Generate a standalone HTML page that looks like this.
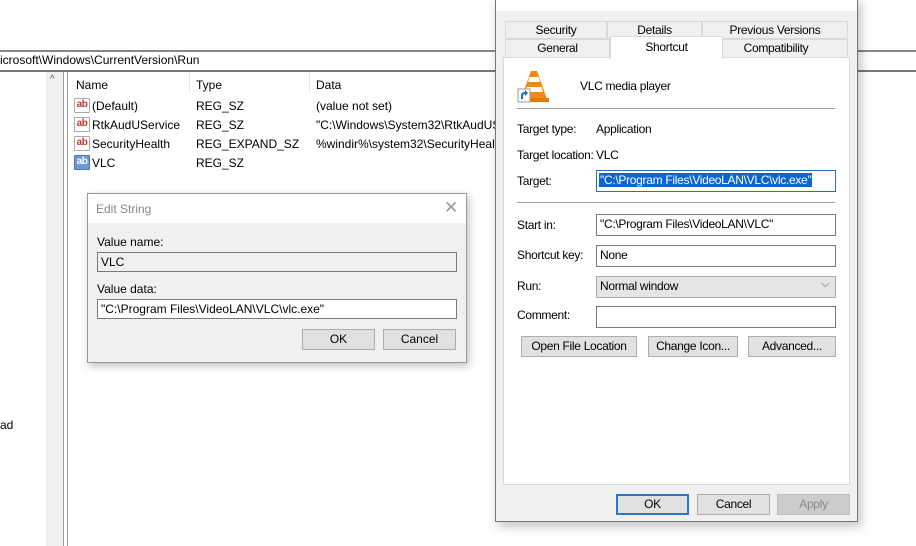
<!DOCTYPE html>
<html><head><meta charset="utf-8"><style>
*{box-sizing:border-box;margin:0;padding:0}
body{width:916px;height:546px;overflow:hidden;background:#fff;font-family:"Liberation Sans",sans-serif;font-size:12px;color:#000;position:relative}
.a{position:absolute}
.t{position:absolute;white-space:nowrap}
.ab{position:absolute;width:16px;height:15px;background:#fff;border:1px solid #aaa;border-radius:1px;font-size:10px;font-weight:bold;color:#c0392b;line-height:12px;text-align:center;letter-spacing:-0.5px}
.ab.v{background:#6a9ad6;color:#fff;border-color:#4a78b8}
.in{position:absolute;background:#fff;border:1px solid #7a7a7a;padding:2px 3px;white-space:nowrap;font-size:12px}
.btn{position:absolute;background:#e1e1e1;border:1px solid #adadad;text-align:center;font-size:12px}
.tab{position:absolute;background:#f0f0f0;border:1px solid #d9d9d9;text-align:center;font-size:12px;line-height:17px}
.pd{letter-spacing:-0.3px}
</style></head><body>
<div class="a" style="left:0;top:50px;width:916px;height:2px;background:#888"></div>
<div class="t" style="left:0;top:53px;font-size:12px">icrosoft\Windows\CurrentVersion\Run</div>
<div class="a" style="left:0;top:70px;width:916px;height:2px;background:#777"></div>
<div class="a" style="left:46px;top:72px;width:17px;height:474px;background:#f0f0f0"></div>
<div class="t" style="left:50px;top:74px;font-size:10px;color:#555">^</div>
<div class="a" style="left:63px;top:72px;width:1px;height:474px;background:#999"></div>
<div class="a" style="left:67px;top:72px;width:1px;height:474px;background:#999"></div>
<div class="t" style="left:0;top:418px">ad</div>
<div class="t" style="left:76px;top:78px">Name</div>
<div class="a" style="left:189px;top:72px;width:1px;height:20px;background:#e5e5e5"></div>
<div class="t" style="left:196px;top:78px">Type</div>
<div class="a" style="left:309px;top:72px;width:1px;height:20px;background:#e5e5e5"></div>
<div class="t" style="left:316px;top:78px">Data</div>
<div class="ab" style="left:74px;top:98px">ab</div><div class="t" style="left:92px;top:99px">(Default)</div>
<div class="t" style="left:196px;top:99px">REG_SZ</div><div class="t" style="left:316px;top:99px">(value not set)</div>
<div class="ab" style="left:74px;top:117px">ab</div><div class="t" style="left:92px;top:118px">RtkAudUService</div>
<div class="t" style="left:196px;top:118px">REG_SZ</div><div class="t" style="left:316px;top:118px">"C:\Windows\System32\RtkAudUS</div>
<div class="ab" style="left:74px;top:136px">ab</div><div class="t" style="left:92px;top:137px">SecurityHealth</div>
<div class="t" style="left:196px;top:137px">REG_EXPAND_SZ</div><div class="t" style="left:316px;top:137px">%windir%\system32\SecurityHealt</div>
<div class="ab v" style="left:74px;top:155px">ab</div><div class="t" style="left:92px;top:156px">VLC</div>
<div class="t" style="left:196px;top:156px">REG_SZ</div>

<div class="a" style="left:87px;top:193px;width:380px;height:170px;background:#f0f0f0;border:1px solid #999;box-shadow:2px 3px 8px rgba(0,0,0,.25)">
 <div class="a" style="left:0;top:0;width:378px;height:29px;background:#fff"></div>
 <div class="t" style="left:8px;top:8px;color:#888;font-size:12px">Edit String</div>
 <div class="t" style="left:356px;top:4px;color:#999;font-size:17px">✕</div>
 <div class="t" style="left:9px;top:41px">Value name:</div>
 <div class="in" style="left:9px;top:58px;width:360px;height:20px;background:#f0f0f0">VLC</div>
 <div class="t" style="left:9px;top:88px">Value data:</div>
 <div class="in" style="left:9px;top:105px;width:360px;height:20px">"C:\Program Files\VideoLAN\VLC\vlc.exe"</div>
 <div class="btn" style="left:214px;top:135px;width:73px;height:21px;line-height:19px">OK</div>
 <div class="btn" style="left:295px;top:135px;width:73px;height:21px;line-height:19px">Cancel</div>
</div>

<div class="a pd" style="left:495px;top:-2px;width:363px;height:524px;background:#f0f0f0;border:1px solid #777;box-shadow:3px 4px 10px rgba(0,0,0,.25)">
 <div class="a" style="left:0;top:0;width:361px;height:12px;background:#fff"></div>
 <div class="a" style="left:7px;top:58px;width:347px;height:428px;background:#fff;border:1px solid #d9d9d9"></div>
 <div class="tab" style="left:9px;top:22px;width:102px;height:18px">Security</div>
 <div class="tab" style="left:111px;top:22px;width:95px;height:18px">Details</div>
 <div class="tab" style="left:206px;top:22px;width:146px;height:18px">Previous Versions</div>
 <div class="tab" style="left:9px;top:40px;width:105px;height:19px">General</div>
 <div class="tab" style="left:208px;top:40px;width:144px;height:19px">Compatibility</div>
 <div class="tab" style="left:114px;top:37px;width:113px;height:23px;background:#fff;border-bottom:none;line-height:20px">Shortcut</div>
 <svg class="a" style="left:21px;top:70px" width="34" height="36" viewBox="0 0 34 36">
  <path d="M14 2 L20 2 L30 30 L4 30 Z" fill="#f08a10"/>
  <path d="M12.5 8 L21.5 8 L23 13 L11 13 Z" fill="#fff"/>
  <path d="M10 18 L24.5 18 L26 23 L8 23 Z" fill="#fff"/>
  <rect x="2" y="29" width="30" height="4" fill="#e07a00"/>
  <rect x="1" y="20" width="12" height="13" fill="#fff" stroke="#999" stroke-width="1"/>
  <path d="M4 30 L4 26 Q4 23 8 23 L8 21 L11 24 L8 27 L8 25 Q6 25 6 27 L6 30Z" fill="#1f6fc0"/>
 </svg>
 <div class="t" style="left:84px;top:80px">VLC media player</div>
 <div class="a" style="left:21px;top:109px;width:318px;height:1px;background:#a0a0a0"></div>
 <div class="t" style="left:21px;top:123px">Target type:</div><div class="t" style="left:100px;top:123px">Application</div>
 <div class="t" style="left:21px;top:149px">Target location:</div><div class="t" style="left:100px;top:149px">VLC</div>
 <div class="t" style="left:21px;top:175px">Target:</div>
 <div class="in" style="left:100px;top:171px;width:240px;height:22px;border-color:#2a6db5;padding:2px 2px"><span style="background:#0a64d2;color:#fff;padding:0 1px">"C:\Program Files\VideoLAN\VLC\vlc.exe"</span></div>
 <div class="a" style="left:21px;top:203px;width:318px;height:1px;background:#a0a0a0"></div>
 <div class="t" style="left:21px;top:219px">Start in:</div>
 <div class="in" style="left:100px;top:215px;width:240px;height:22px">"C:\Program Files\VideoLAN\VLC"</div>
 <div class="t" style="left:21px;top:249px">Shortcut key:</div>
 <div class="in" style="left:100px;top:246px;width:240px;height:22px">None</div>
 <div class="t" style="left:21px;top:280px">Run:</div>
 <div class="in" style="left:100px;top:277px;width:240px;height:22px;background:#e5e5e5;border-color:#adadad">Normal window</div>
 <div class="t" style="left:325px;top:279px;color:#555;font-size:11px">⌵</div>
 <div class="t" style="left:21px;top:309px">Comment:</div>
 <div class="in" style="left:100px;top:307px;width:240px;height:22px"></div>
 <div class="btn" style="left:25px;top:337px;width:116px;height:21px;line-height:19px">Open File Location</div>
 <div class="btn" style="left:152px;top:337px;width:90px;height:21px;line-height:19px">Change Icon...</div>
 <div class="btn" style="left:252px;top:337px;width:88px;height:21px;line-height:19px">Advanced...</div>
 <div class="btn" style="left:120px;top:495px;width:73px;height:21px;line-height:17px;border:2px solid #2a78c8">OK</div>
 <div class="btn" style="left:201px;top:495px;width:73px;height:21px;line-height:19px">Cancel</div>
 <div class="btn" style="left:281px;top:495px;width:73px;height:21px;line-height:19px;background:#cccccc;border-color:#bfbfbf;color:#8a8a8a">Apply</div>
</div>
</body></html>
